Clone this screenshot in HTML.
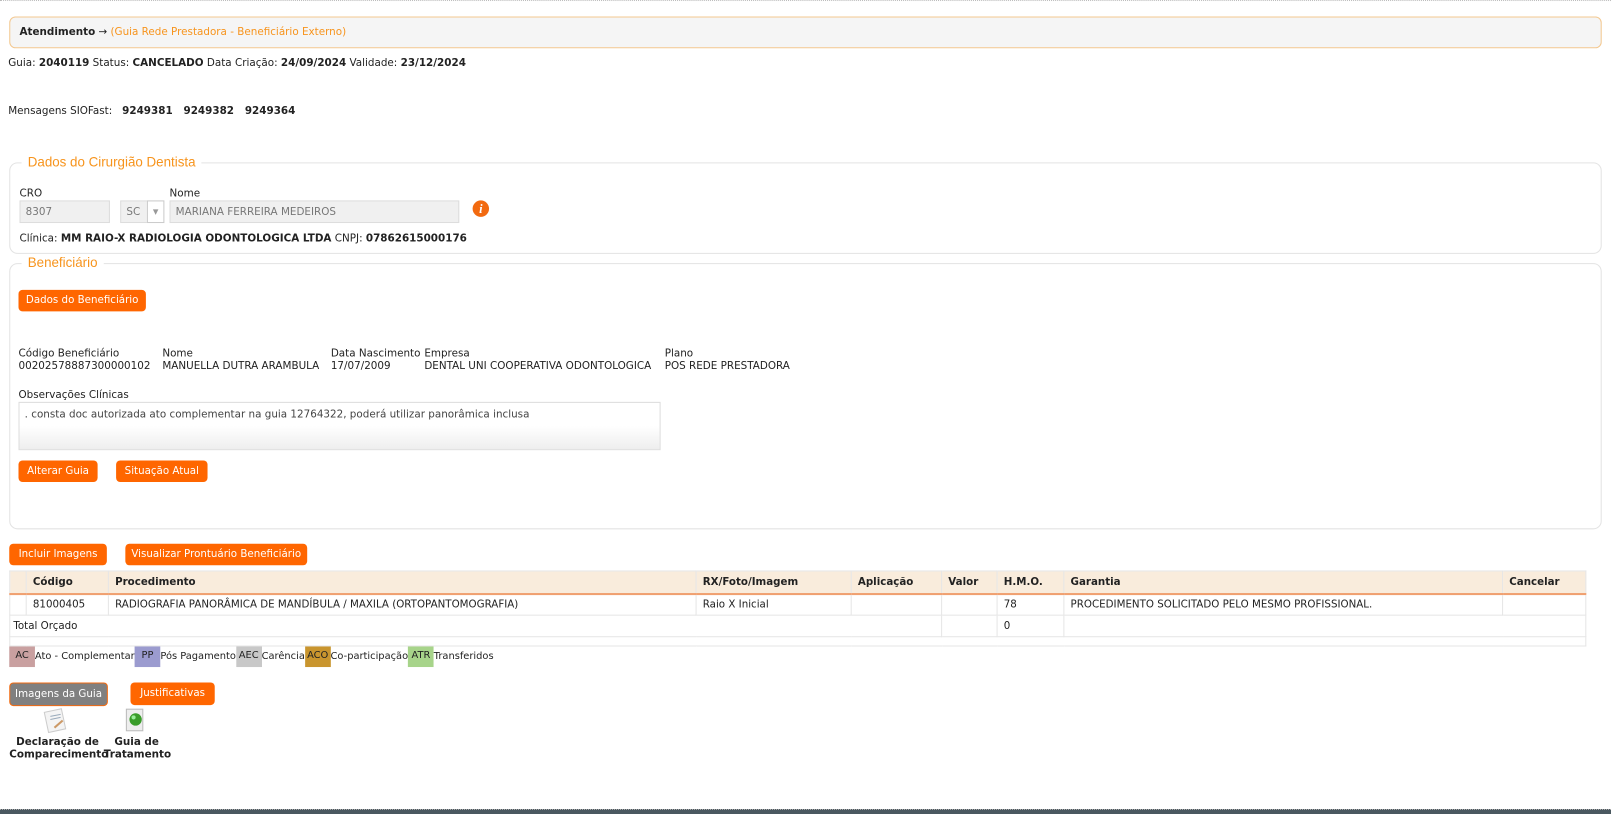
<!DOCTYPE html>
<html><head><meta charset="utf-8"><style>
*{box-sizing:border-box;margin:0;padding:0}
body{width:1611px;height:814px;position:relative;overflow:hidden;background:#fff;font-family:"DejaVu Sans",Verdana,sans-serif;font-size:10.1px;color:#222}
#w{position:absolute;left:0;top:0;width:1568px;height:792px;transform:scale(1.0274,1.0278);transform-origin:0 0;border-top:1px dotted #bbb}
.a{position:absolute;white-space:nowrap}
b{font-weight:bold}
.hdr{left:9px;top:15px;width:1550px;height:31px;background:#f5f5f5;border:1px solid #f3c890;border-radius:6px;padding:9px 9px}
.or{color:#f7941d}
.fs{left:9px;width:1550px;border:1px solid #e3e3e3;border-radius:8px}
.lg{background:#fff;padding:0 6px;color:#f7941d;font-size:13px;font-family:"Liberation Sans",Arial,sans-serif}
.inp{background:#f0f0f0;border:1px solid #ddd;color:#777;padding:5px 5px;height:22px}
.btn{background:#ff6600;color:#fff;border-radius:4px;font-size:10px;text-align:center;line-height:21px;height:21px}
table{border-collapse:collapse;position:absolute;left:9px;top:554px;width:1535px}
td,th{border:1px solid #e6e6e6;padding:0 6px;height:21px;text-align:left;font-size:10px}
th{background:#f9ecdc;font-weight:bold;height:22px;border-bottom:2px solid #f0a070}
.tag{display:inline-block;height:20px;line-height:18px;width:25px;text-align:center;vertical-align:top}
</style></head><body>
<div id="w">
<div class="a hdr"><b>Atendimento</b> → <span class="or">(Guia Rede Prestadora - Beneficiário Externo)</span></div>
<div class="a" style="left:8px;top:55px">Guia: <b>2040119</b> Status: <b>CANCELADO</b> Data Criação: <b>24/09/2024</b> Validade: <b>23/12/2024</b></div>
<div class="a" style="left:8px;top:102px">Mensagens SIOFast: &nbsp; <b>9249381 &nbsp; 9249382 &nbsp; 9249364</b></div>

<div class="a fs" style="top:157px;height:89px"></div>
<div class="a lg" style="left:21px;top:149px">Dados do Cirurgião Dentista</div>
<div class="a" style="left:19px;top:182px">CRO</div>
<div class="a" style="left:165px;top:182px">Nome</div>
<div class="a inp" style="left:19px;top:194px;width:88px">8307</div>
<div class="a inp" style="left:117px;top:194px;width:43px">SC</div>
<div class="a" style="left:143px;top:194px;width:17px;height:22px;border:1px solid #ccc;background:#fff;color:#999;text-align:center;line-height:20px;font-size:7px">▼</div>
<div class="a inp" style="left:165px;top:194px;width:282px">MARIANA FERREIRA MEDEIROS</div>
<div class="a" style="left:460px;top:194px;width:16px;height:16px;border-radius:50%;background:#f26a10;color:#fff;font-weight:bold;font-style:italic;text-align:center;line-height:16px;font-family:'Liberation Serif',serif;font-size:12px">i</div>
<div class="a" style="left:19px;top:226px">Clínica: <b>MM RAIO-X RADIOLOGIA ODONTOLOGICA LTDA</b> CNPJ: <b>07862615000176</b></div>

<div class="a fs" style="top:255px;height:259px"></div>
<div class="a lg" style="left:21px;top:247px">Beneficiário</div>
<div class="a btn" style="left:18px;top:281px;width:124px">Dados do Beneficiário</div>
<div class="a" style="left:18px;top:338px;line-height:12px">Código Beneficiário<br>00202578887300000102</div>
<div class="a" style="left:158px;top:338px;line-height:12px">Nome<br>MANUELLA DUTRA ARAMBULA</div>
<div class="a" style="left:322px;top:338px;line-height:12px">Data Nascimento<br>17/07/2009</div>
<div class="a" style="left:413px;top:338px;line-height:12px">Empresa<br>DENTAL UNI COOPERATIVA ODONTOLOGICA</div>
<div class="a" style="left:647px;top:338px;line-height:12px">Plano<br>POS REDE PRESTADORA</div>
<div class="a" style="left:18px;top:378px">Observações Clínicas</div>
<div class="a" style="left:18px;top:390px;width:625px;height:47px;border:1px solid #ddd;background:linear-gradient(#fff 50%,#eee);padding:6px 5px;color:#444">. consta doc autorizada ato complementar na guia 12764322, poderá utilizar panorâmica inclusa</div>
<div class="a btn" style="left:18px;top:447px;width:77px">Alterar Guia</div>
<div class="a btn" style="left:113px;top:447px;width:89px">Situação Atual</div>

<div class="a btn" style="left:9px;top:528px;width:95px">Incluir Imagens</div>
<div class="a btn" style="left:122px;top:528px;width:177px">Visualizar Prontuário Beneficiário</div>

<table>
<tr><th style="width:16px"></th><th style="width:80px">Código</th><th style="width:572px">Procedimento</th><th style="width:151px">RX/Foto/Imagem</th><th style="width:88px">Aplicação</th><th style="width:54px">Valor</th><th style="width:65px">H.M.O.</th><th style="width:427px">Garantia</th><th>Cancelar</th></tr>
<tr><td></td><td>81000405</td><td>RADIOGRAFIA PANORÂMICA DE MANDÍBULA / MAXILA (ORTOPANTOMOGRAFIA)</td><td>Raio X Inicial</td><td></td><td></td><td>78</td><td>PROCEDIMENTO SOLICITADO PELO MESMO PROFISSIONAL.</td><td></td></tr>
<tr><td colspan="5" style="padding-left:3px">Total Orçado</td><td></td><td>0</td><td colspan="2"></td></tr>
<tr><td colspan="9" style="height:9px"></td></tr>
</table>

<div class="a" style="left:9px;top:628px;line-height:20px;font-size:9.6px">
<span class="tag" style="background:#c9a0a0">AC</span>Ato - Complementar<span class="tag" style="background:#9b9bcf">PP</span>Pós Pagamento<span class="tag" style="background:#c8c8c8">AEC</span>Carência<span class="tag" style="background:#c9952e">ACO</span>Co-participação<span class="tag" style="background:#a7d48a">ATR</span>Transferidos</div>

<div class="a btn" style="left:9px;top:663px;width:96px;height:23px;background:#808080;border:1px solid #f26a10;line-height:21px">Imagens da Guia</div>
<div class="a btn" style="left:127px;top:663px;width:82px;height:22px">Justificativas</div>

<svg class="a" style="left:42px;top:687px" width="24" height="26"><rect x="3" y="3" width="17" height="20" fill="#f4f4f4" stroke="#ccc" transform="rotate(-12 12 13)"/><line x1="7" y1="9" x2="17" y2="7" stroke="#9ab"/><line x1="7" y1="12" x2="17" y2="10" stroke="#9ab"/><line x1="11" y1="20" x2="19" y2="13" stroke="#c96" stroke-width="2"/></svg>
<svg class="a" style="left:120px;top:687px" width="22" height="26"><rect x="3" y="2" width="16" height="21" fill="#eee" stroke="#bbb"/><circle cx="12" cy="12" r="6" fill="#3a9d2a"/><circle cx="10" cy="10" r="2" fill="#9e9"/></svg>
<div class="a" style="left:9px;top:716px;width:94px;text-align:center;font-weight:bold;line-height:12px">Declaração de<br>Comparecimento</div>
<div class="a" style="left:101px;top:716px;width:64px;text-align:center;font-weight:bold;line-height:12px">Guia de<br>Tratamento</div>
</div>
<div class="a" style="left:0;top:809px;width:1611px;height:5px;background:#4a5860;border-top:1px dotted #aaa"></div>
</body></html>
